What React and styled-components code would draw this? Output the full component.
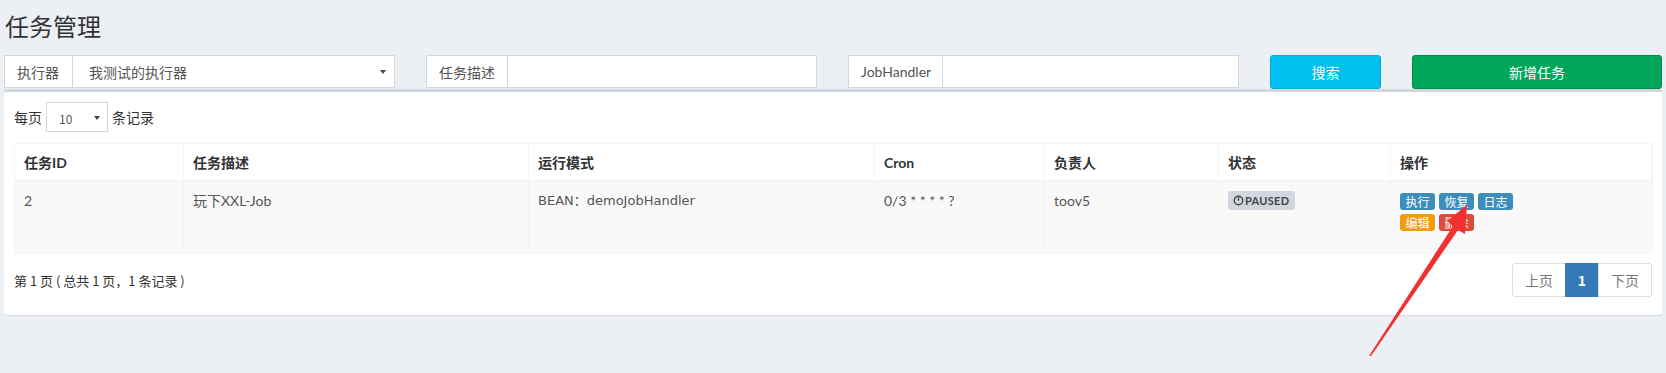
import React from "react";
import styled, { createGlobalStyle } from "styled-components";

const Global = createGlobalStyle`
  html, body { margin: 0; padding: 0; }
  body {
    background: #ecf0f5;
    font-family: "Lato", "Noto Sans CJK SC", sans-serif;
    font-size: 14px;
    color: #333;
    height: 373px;
    overflow: hidden;
  }
`;

const Page = styled.div`
  position: relative;
  padding: 0 4px;
  height: 373px;
`;

const Title = styled.h1`
  margin: 0;
  padding: 11px 0 0 1px;
  height: 44px;
  box-sizing: border-box;
  font-size: 24px;
  font-weight: 400;
  line-height: 30px;
  color: #333;
  font-family: "Noto Sans CJK SC", sans-serif;
`;

const FilterRow = styled.div`
  display: grid;
  grid-template-columns: 391px 391px 391px 111px 250px;
  column-gap: 31px;
  height: 34px;
  margin-top: 11px;
`;

const InputGroup = styled.div`
  display: flex;
  height: 33px;
  background: #fff;
  border: 1px solid #d2d6de;
  box-sizing: border-box;
`;

const Addon = styled.div`
  width: ${(p) => p.$w}px;
  flex: none;
  display: flex;
  align-items: center;
  padding-left: 12px;
  box-sizing: border-box;
  border-right: 1px solid #d2d6de;
  color: #555;
  font-size: 14px;
  font-family: "Noto Sans CJK SC", sans-serif;
`;

const AddonLatin = styled(Addon)`
  font-family: "Lato", sans-serif;
`;

const Field = styled.div`
  flex: 1;
  display: flex;
  align-items: center;
  justify-content: space-between;
  padding: 0 8px 0 16px;
  color: #555;
  font-size: 14px;
  font-family: "Noto Sans CJK SC", sans-serif;
`;

const Caret = styled.span`
  width: 0;
  height: 0;
  border-left: ${(p) => p.$s}px solid transparent;
  border-right: ${(p) => p.$s}px solid transparent;
  border-top: ${(p) => p.$s + 1}px solid #444;
`;

const Btn = styled.div`
  height: 34px;
  border-radius: 3px;
  background: ${(p) => p.$bg};
  border: 1px solid ${(p) => p.$bd};
  box-sizing: border-box;
  color: #fff;
  display: flex;
  align-items: center;
  justify-content: center;
  font-size: 14px;
  font-family: "Noto Sans CJK SC", sans-serif;
`;

const Panel = styled.div`
  background: #fff;
  border-top: 3px solid #d2d6de;
  border-radius: 3px;
  box-shadow: 0 1px 1px rgba(0, 0, 0, 0.1);
  padding: 10px 10px 18px 10px;
  width: 1658px;
  box-sizing: border-box;
`;

const LengthRow = styled.div`
  display: flex;
  align-items: center;
  gap: 4px;
  height: 30px;
  font-family: "Noto Sans CJK SC", sans-serif;
  font-size: 14px;
  color: #333;
`;

const SmallSelect = styled.div`
  width: 62px;
  height: 30px;
  border: 1px solid #d2d6de;
  box-sizing: border-box;
  display: flex;
  align-items: center;
  justify-content: space-between;
  padding: 2px 7px 0 12px;
  font-size: 12px;
  color: #555;
`;

const Table = styled.div`
  margin-top: 11px;
  display: grid;
  grid-template-columns: 169px 345px 346px 170px 174px 172px 262px;
  width: 1638px;
  border: 1px solid #f4f4f4;
  box-sizing: border-box;
`;

const Th = styled.div`
  height: 38px;
  box-sizing: border-box;
  padding: 0 9px;
  display: flex;
  align-items: center;
  font-weight: 700;
  font-size: 14px;
  color: #333;
  border-right: 1px solid #f4f4f4;
  border-bottom: 2px solid #f4f4f4;
  font-family: "Lato", "Noto Sans CJK SC", sans-serif;
  &:last-child { border-right: none; }
`;

const Td = styled.div`
  height: 71px;
  box-sizing: border-box;
  background: #f9f9f9;
  padding: 9px 9px 0;
  line-height: 20px;
  color: #555;
  border-right: 1px solid #f4f4f4;
  font-family: ${(p) => (p.$mono ? '"DejaVu Sans", "Noto Sans CJK SC", sans-serif' : '"Lato", "Noto Sans CJK SC", sans-serif')};
  font-size: ${(p) => (p.$mono ? "13px" : "14px")};
  &:last-child { border-right: none; }
`;

const StatusLabel = styled.span`
  display: inline-flex;
  align-items: center;
  gap: 1px;
  height: 19px;
  padding: 0 6px 0 5px;
  border-radius: 3px;
  background: #d2d6de;
  color: #444;
  font-size: 11px;
  font-weight: 700;
  letter-spacing: 0.3px;
  vertical-align: top;
`;

const Ops = styled.div`
  display: grid;
  grid-template-columns: repeat(3, 35px);
  gap: 4px 4px;
  margin-top: 2px;
`;

const OpBtn = styled.div`
  height: 17px;
  border-radius: 3px;
  background: ${(p) => p.$bg};
  color: #fff;
  font-size: 12px;
  line-height: 17px;
  text-align: center;
  font-family: "Noto Sans CJK SC", sans-serif;
`;

const Footer = styled.div`
  display: flex;
  justify-content: space-between;
  align-items: center;
  margin-top: 9px;
`;

const Info = styled.div`
  font-size: 13px;
  color: #333;
  font-family: "Noto Sans CJK SC", sans-serif;
`;

const Pager = styled.div`
  display: flex;
  height: 34px;
`;

const PageItem = styled.div`
  width: ${(p) => p.$w}px;
  box-sizing: border-box;
  display: flex;
  align-items: center;
  justify-content: center;
  border: 1px solid ${(p) => (p.$active ? "#337ab7" : "#ddd")};
  margin-left: -1px;
  background: ${(p) => (p.$active ? "#337ab7" : "#fff")};
  color: ${(p) => (p.$active ? "#fff" : "#777")};
  font-weight: ${(p) => (p.$active ? 700 : 400)};
  font-size: 14px;
  font-family: "Noto Sans CJK SC", sans-serif;
  &:first-child { border-radius: 3px 0 0 3px; margin-left: 0; }
  &:last-child { border-radius: 0 3px 3px 0; }
`;

const ArrowLayer = styled.svg`
  position: absolute;
  left: 0;
  top: 0;
  width: 1666px;
  height: 373px;
  pointer-events: none;
`;

const ClockIcon = () => (
  <svg width="11" height="11" viewBox="0 0 12 12">
    <circle cx="6" cy="6" r="4.6" fill="none" stroke="#444" strokeWidth="1.5" />
    <line x1="6" y1="2.5" x2="6" y2="6.3" stroke="#444" strokeWidth="1.5" />
  </svg>
);

const headers = ["任务ID", "任务描述", "运行模式", "Cron", "负责人", "状态", "操作"];

export default function App() {
  return (
    <>
      <Global />
      <Page>
        <Title>任务管理</Title>
        <FilterRow>
          <InputGroup>
            <Addon $w={68}>执行器</Addon>
            <Field>
              <span>我测试的执行器</span>
              <Caret $s={3} />
            </Field>
          </InputGroup>
          <InputGroup>
            <Addon $w={81}>任务描述</Addon>
            <Field />
          </InputGroup>
          <InputGroup>
            <AddonLatin $w={94}>JobHandler</AddonLatin>
            <Field />
          </InputGroup>
          <Btn $bg="#00c0ef" $bd="#00acd6">搜索</Btn>
          <Btn $bg="#00a65a" $bd="#008d4c">新增任务</Btn>
        </FilterRow>
        <Panel>
          <LengthRow>
            <span>每页</span>
            <SmallSelect>
              <span>10</span>
              <Caret $s={3} />
            </SmallSelect>
            <span>条记录</span>
          </LengthRow>
          <Table>
            {headers.map((h) => (
              <Th key={h}>{h}</Th>
            ))}
            <Td>2</Td>
            <Td>玩下XXL-Job</Td>
            <Td $mono>BEAN：demoJobHandler</Td>
            <Td>0/3 * * * * ?</Td>
            <Td>toov5</Td>
            <Td>
              <StatusLabel>
                <ClockIcon />
                PAUSED
              </StatusLabel>
            </Td>
            <Td>
              <Ops>
                <OpBtn $bg="#3c8dbc">执行</OpBtn>
                <OpBtn $bg="#3c8dbc">恢复</OpBtn>
                <OpBtn $bg="#3c8dbc">日志</OpBtn>
                <OpBtn $bg="#f39c12">编辑</OpBtn>
                <OpBtn $bg="#dd4b39">删除</OpBtn>
              </Ops>
            </Td>
          </Table>
          <Footer>
            <Info>第 1 页 ( 总共 1 页，1 条记录 )</Info>
            <Pager>
              <PageItem $w={54}>上页</PageItem>
              <PageItem $w={34} $active>1</PageItem>
              <PageItem $w={54}>下页</PageItem>
            </Pager>
          </Footer>
        </Panel>
        <ArrowLayer viewBox="0 0 1666 373">
          <polygon
            points="1369,356 1371,356 1458,230 1465,234 1467,205 1447,221 1453,226"
            fill="#f23030"
          />
        </ArrowLayer>
      </Page>
    </>
  );
}
